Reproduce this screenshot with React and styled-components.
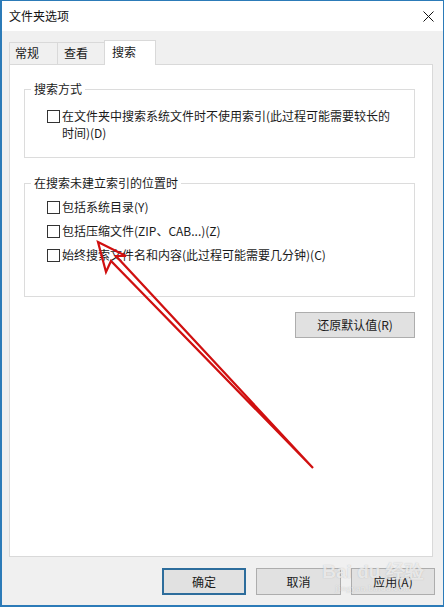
import React from "react";
import styled, { createGlobalStyle } from "styled-components";

const Global = createGlobalStyle`
  html, body { margin: 0; padding: 0; background: #ffffff; }
  * { box-sizing: border-box; }
  body { font-family: "Noto Sans CJK SC", "Noto Sans", sans-serif; font-size: 12px; color: #1a1a1a; }
`;

const Stage = styled.div`
  position: relative;
  width: 444px;
  height: 607px;
  overflow: hidden;
`;

const Window = styled.div`
  width: 444px;
  height: 607px;
  border: 1px solid #2c7bb8;
  border-left-width: 2px;
  border-bottom-width: 2px;
  display: flex;
  flex-direction: column;
  background: #f0f0f0;
`;

const TitleBar = styled.div`
  height: 30px;
  background: #ffffff;
  display: flex;
  align-items: center;
  justify-content: space-between;
  padding: 0 9px 0 7px;
  flex-shrink: 0;
`;

const Title = styled.span`
  font-size: 12px;
  line-height: 16px;
  color: #111;
`;

const Body = styled.div`
  flex: 1;
  display: flex;
  flex-direction: column;
  padding: 9px 10px 0 7px;
`;

const TabRow = styled.div`
  display: flex;
  align-items: flex-end;
  height: 24px;
`;

const Tab = styled.div`
  width: ${(p) => p.$w}px;
  height: ${(p) => (p.$active ? 25 : 22)}px;
  margin-bottom: ${(p) => (p.$active ? -1 : 0)}px;
  position: relative;
  z-index: ${(p) => (p.$active ? 2 : 1)};
  background: ${(p) => (p.$active ? "#ffffff" : "#f0f0f0")};
  border: 1px solid #d9d9d9;
  border-bottom: none;
  margin-left: ${(p) => (p.$first ? 0 : -1)}px;
  padding-left: ${(p) => p.$pl}px;
  padding-top: ${(p) => (p.$active ? 3 : 2)}px;
  font-size: 12px;
  line-height: 16px;
`;

const Panel = styled.div`
  height: 493px;
  background: #ffffff;
  border: 1px solid #d9d9d9;
  padding: 16px 17px 0 14px;
  display: flex;
  flex-direction: column;
`;

const Group = styled.fieldset`
  margin: 0;
  margin-top: ${(p) => p.$mt || 0}px;
  padding: ${(p) => p.$pad};
  border: 1px solid #dcdcdc;
  min-width: 0;
`;

const Legend = styled.legend`
  margin-left: 6px;
  padding: 0 3px;
  font-size: 12px;
  line-height: 16px;
  color: #1a1a1a;
`;

const Row = styled.label`
  display: flex;
  align-items: ${(p) => (p.$multi ? "flex-start" : "center")};
  gap: 2px;
  padding-left: 22px;
  line-height: ${(p) => (p.$multi ? 17 : 24)}px;
  font-size: 12px;
  color: #1a1a1a;
`;

const Box = styled.span`
  width: 13px;
  height: 13px;
  flex-shrink: 0;
  border: 1px solid #333333;
  background: #ffffff;
  margin-top: ${(p) => (p.$multi ? 3 : 0)}px;
`;

const Button = styled.button`
  width: ${(p) => p.$w}px;
  height: ${(p) => p.$h}px;
  background: #e1e1e1;
  border: ${(p) => (p.$default ? "2px solid #2d6d9c" : "1px solid #adadad")};
  font-family: "Noto Sans CJK SC", "Noto Sans", sans-serif;
  font-size: 12px;
  color: #1a1a1a;
  padding: 0;
  line-height: 16px;
`;

const ResetRow = styled.div`
  display: flex;
  justify-content: flex-end;
  margin-top: 15px;
`;

const Footer = styled.div`
  display: flex;
  justify-content: flex-end;
  gap: 10px;
  margin-top: 11px;
  margin-right: -2px;
`;

const Overlay = styled.svg`
  position: absolute;
  left: 0;
  top: 0;
  pointer-events: none;
`;

const Watermark = styled.div`
  position: absolute;
  left: 328px;
  top: 561px;
  width: 90px;
  pointer-events: none;
  display: flex;
  flex-direction: column;
  align-items: center;
  white-space: nowrap;
  color: rgba(255, 255, 255, 0.7);
  text-shadow: 0 0 1px rgba(130, 130, 130, 0.5);
`;

const WmBig = styled.span`
  font-family: "Liberation Sans", Arial, sans-serif;
  font-size: 19px;
  font-weight: bold;
  line-height: 22px;
`;

const WmSmall = styled.span`
  font-family: "Liberation Serif", serif;
  font-size: 9px;
  line-height: 10px;
  letter-spacing: 0.5px;
`;

function CloseIcon() {
  return (
    <svg width="11" height="11" viewBox="0 0 11 11">
      <path d="M0.5 0.5 L10.5 10.5 M10.5 0.5 L0.5 10.5" stroke="#111" strokeWidth="1" />
    </svg>
  );
}

function Check({ children, multi }) {
  return (
    <Row $multi={multi}>
      <Box $multi={multi} />
      <span>{children}</span>
    </Row>
  );
}

export default function App() {
  return (
    <Stage>
      <Global />
      <Window>
        <TitleBar>
          <Title>文件夹选项</Title>
          <CloseIcon />
        </TitleBar>
        <Body>
          <TabRow>
            <Tab $w={49} $pl={5} $first>常规</Tab>
            <Tab $w={48} $pl={6}>查看</Tab>
            <Tab $w={52} $pl={7} $active>搜索</Tab>
          </TabRow>
          <Panel>
            <Group $pad="10px 0 16px 0">
              <Legend>搜索方式</Legend>
              <Check multi>
                在文件夹中搜索系统文件时不使用索引(此过程可能需要较长的
                <br />
                时间)(D)
              </Check>
            </Group>
            <Group $mt={17} $pad="4px 0 29px 0">
              <Legend>在搜索未建立索引的位置时</Legend>
              <Check>包括系统目录(Y)</Check>
              <Check>包括压缩文件(ZIP、CAB...)(Z)</Check>
              <Check>始终搜索文件名和内容(此过程可能需要几分钟)(C)</Check>
            </Group>
            <ResetRow>
              <Button $w={120} $h={26}>还原默认值(R)</Button>
            </ResetRow>
          </Panel>
          <Footer>
            <Button $w={84} $h={27} $default>确定</Button>
            <Button $w={85} $h={27}>取消</Button>
            <Button $w={84} $h={27}>应用(A)</Button>
          </Footer>
        </Body>
      </Window>
      <Watermark>
        <WmBig>Bai du 经验</WmBig>
        <WmSmall>jingyan.baidu.com</WmSmall>
      </Watermark>
      <Overlay width="444" height="607" viewBox="0 0 444 607">
        <polygon
          points="98,242 126,256 116,256 313,468 111,261 106,272"
          fill="none"
          stroke="#d01010"
          strokeWidth="2.2"
          strokeLinejoin="miter"
        />
      </Overlay>
    </Stage>
  );
}
